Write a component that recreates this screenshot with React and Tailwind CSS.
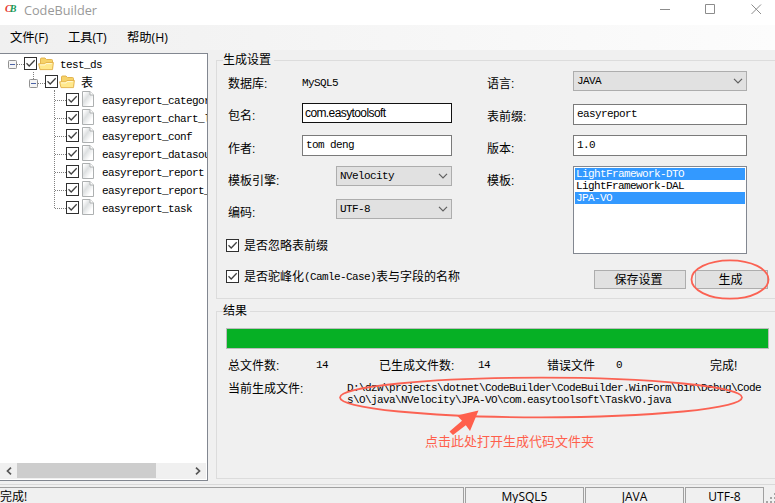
import React from 'react';

const tables = [
  'easyreport_category',
  'easyreport_chart_list',
  'easyreport_conf',
  'easyreport_datasource',
  'easyreport_report',
  'easyreport_report_his',
  'easyreport_task',
];

function Mono({ children, className = '' }) {
  return (
    <span className={`font-['Liberation_Mono','Noto_Sans_CJK_SC',monospace] text-[11px] tracking-[-0.6px] whitespace-pre ${className}`}>
      {children}
    </span>
  );
}

function Label({ children, className = '' }) {
  return (
    <div className={`flex h-4 items-center pt-[2px] whitespace-nowrap ${className}`}>
      <span>{children}</span>
    </div>
  );
}

function Value({ children, className = '' }) {
  return (
    <div className={`flex h-4 items-center ${className}`}>
      <Mono>{children}</Mono>
    </div>
  );
}

function CheckBox() {
  return (
    <svg className="block h-[13px] w-[13px] shrink-0" viewBox="0 0 13 13">
      <rect x="0.5" y="0.5" width="12" height="12" fill="#fff" stroke="#303030" />
      <path d="M2.5 6.3 L5.2 9 L10.7 3.3" fill="none" stroke="#404040" strokeWidth="1.3" />
    </svg>
  );
}

function Expander() {
  return (
    <svg className="block h-[9px] w-[9px] shrink-0" viewBox="0 0 9 9">
      <rect x="0.5" y="0.5" width="8" height="8" rx="0.8" fill="#f4f4f4" stroke="#919191" />
      <path d="M2 4.5H7" stroke="#4b63a7" />
    </svg>
  );
}

function Folder() {
  return (
    <svg className="block h-[16px] w-[16px] shrink-0" viewBox="0 0 16 16">
      <path d="M2.5 13 V3 Q2.5 2 3.5 2 H7 L8.5 3.5 H13.5 Q14.5 3.5 14.5 4.5 V12 Z" fill="#f6d269" stroke="#dfae45" strokeWidth="0.9" />
      <path d="M0.6 7.8 H6.5 L7.8 6.5 H15.4 L14.5 13.6 H2 Z" fill="#ffe88c" stroke="#e2b048" strokeWidth="0.9" />
      <path d="M2 8.9 H7 L8.3 7.6 H13.8" fill="none" stroke="#fff9d8" />
    </svg>
  );
}

function FileIcon() {
  return (
    <svg className="block h-[16px] w-[12px] shrink-0" viewBox="0 0 12 16">
      <defs>
        <linearGradient id="paper" x1="0" y1="0" x2="1" y2="1">
          <stop offset="0.1" stopColor="#fff" />
          <stop offset="0.4" stopColor="#dde0e1" />
          <stop offset="0.75" stopColor="#fff" />
        </linearGradient>
      </defs>
      <path d="M0.5 0.5 H8 L11.5 4 V15.5 H0.5 Z" fill="url(#paper)" stroke="#adb0b1" />
      <path d="M8 0.5 V4 H11.5" fill="#fff" stroke="#adb0b1" />
    </svg>
  );
}

function Combo({ children, className = '' }) {
  return (
    <div className={`flex h-5 items-center justify-between border border-[#adadad] bg-[#e1e1e1] pr-[3px] pl-[3px] ${className}`}>
      <Mono>{children}</Mono>
      <svg className="h-[6px] w-[10px]" viewBox="0 0 10 6">
        <path d="M1 0.8 L5 4.8 L9 0.8" fill="none" stroke="#5f5f5f" strokeWidth="1.2" />
      </svg>
    </div>
  );
}

function Field({ children, className = '' }) {
  return (
    <div className={`flex h-[21px] items-center border border-[#7a7a7a] bg-white pb-[2px] pl-[3px] ${className}`}>
      <Mono>{children}</Mono>
    </div>
  );
}

function Tree() {
  return (
    <div className="mt-[3px] flex h-[428px] w-[208px] shrink-0 flex-col overflow-hidden border-t border-r border-b border-[#828790] bg-white">
      <div className="flex h-[18px] shrink-0 items-center pt-[3px] pl-2">
        <Expander />
        <span className="w-[7px] border-t border-dotted border-[#808080]" />
        <div className="-mt-[3px]"><CheckBox /></div>
        <div className="-mt-px ml-px"><Folder /></div>
        <Mono className="ml-[6px]">test_ds</Mono>
      </div>
      <div className="flex h-[18px] shrink-0 items-center pl-[29px]">
        <div className="flex h-[18px] flex-col items-center">
          <span className="h-[7px] w-px border-l border-dotted border-[#808080]" />
          <Expander />
        </div>
        <span className="mt-[4px] w-[7px] border-t border-dotted border-[#808080]" />
        <CheckBox />
        <div className="mt-[2px] ml-px"><Folder /></div>
        <span className="mt-[3px] ml-[6px]">表</span>
      </div>
      <div className="flex shrink-0">
        <div className="ml-[54px] h-[118px] w-px border-l border-dotted border-[#808080]" />
        <div className="flex flex-col">
          {tables.map((name) => (
            <div key={name} className="flex h-[18px] items-center">
              <span className="mt-[3px] w-[11px] border-t border-dotted border-[#808080]" />
              <CheckBox />
              <div className="ml-[3px]"><FileIcon /></div>
              <Mono className="mt-[3px] ml-[8px]">{name}</Mono>
            </div>
          ))}
        </div>
      </div>
      <div className="mt-auto mr-px mb-px flex h-4 shrink-0 items-center bg-[#f0f0f0]">
        <div className="flex w-[17px] justify-center">
          <svg className="h-2 w-[6px]" viewBox="0 0 6 8"><path d="M5 0.7 L1.5 4 L5 7.3" fill="none" stroke="#555" strokeWidth="1.7" /></svg>
        </div>
        <div className="h-[15px] w-[139px] self-start bg-[#cdcdcd]" />
        <div className="ml-auto flex w-4 justify-center">
          <svg className="h-2 w-[6px]" viewBox="0 0 6 8"><path d="M1 0.7 L4.5 4 L1 7.3" fill="none" stroke="#555" strokeWidth="1.7" /></svg>
        </div>
      </div>
    </div>
  );
}

function Settings() {
  return (
    <section className="mt-[10px] flex h-[239px] flex-col border-t border-b border-l border-[#dcdcdc]">
      <div className="-mt-[8px] ml-[6px] flex h-[14px] w-[51px] shrink-0 items-center bg-[#f0f0f0] whitespace-nowrap">生成设置</div>
      <div className="flex pt-1">
        <div className="ml-[11px] flex w-[74px] flex-col pt-1">
          <Label>数据库:</Label>
          <Label className="mt-4">包名:</Label>
          <Label className="mt-[17px]">作者:</Label>
          <Label className="mt-4">模板引擎:</Label>
          <Label className="mt-4">编码:</Label>
        </div>
        <div className="flex w-[150px] flex-col pt-1">
          <Value>MySQL5</Value>
          <div className="mt-3 flex h-5 items-center border border-[#111] bg-white pl-[2px] font-['Liberation_Sans',sans-serif] text-[12px] tracking-[-0.6px]">com.easytoolsoft</div>
          <Field className="mt-3">tom deng</Field>
          <Combo className="mt-[10px] ml-[34px]">NVelocity</Combo>
          <Combo className="mt-[13px] ml-[34px]">UTF-8</Combo>
        </div>
        <div className="ml-[35px] flex w-[86px] flex-col pt-1">
          <Label>语言:</Label>
          <Label className="mt-[17px]">表前缀:</Label>
          <Label className="mt-4">版本:</Label>
          <Label className="mt-4">模板:</Label>
        </div>
        <div className="flex w-[174px] flex-col">
          <Combo>JAVA</Combo>
          <Field className="mt-[13px]">easyreport</Field>
          <Field className="mt-[10px]">1.0</Field>
          <div className="mt-[10px] flex h-[88px] flex-col border border-[#828790] bg-white p-px">
            <Mono className="h-3 bg-[#3399ff] pl-px leading-3 text-white">LightFramework-DTO</Mono>
            <Mono className="h-3 pl-px leading-3">LightFramework-DAL</Mono>
            <Mono className="h-3 bg-[#3399ff] pl-px leading-3 text-white">JPA-VO</Mono>
          </div>
        </div>
      </div>
      <div className="-mt-[17px] ml-[9px] flex h-4 shrink-0 items-center gap-[5px]">
        <CheckBox />
        <span className="pt-[2px]">是否忽略表前缀</span>
      </div>
      <div className="mt-[15px] flex h-[19px] shrink-0">
        <div className="ml-[9px] flex h-4 w-[368px] items-center gap-[5px] whitespace-nowrap">
          <CheckBox />
          <span className="flex items-center pt-[2px]">是否驼峰化<Mono>(Camle-Case)</Mono>表与字段的名称</span>
        </div>
        <button className="mt-[2px] flex h-[19px] w-[92px] shrink-0 items-center justify-center border border-[#adadad] bg-[#e1e1e1] pr-[3px]">保存设置</button>
        <button className="mt-[2px] ml-[9px] flex h-[19px] w-[73px] shrink-0 items-center justify-center border border-[#adadad] bg-[#e1e1e1] pr-[2px]">生成</button>
      </div>
    </section>
  );
}

function Results() {
  return (
    <section className="mt-3 flex h-[168px] flex-col border-t border-b border-l border-[#dcdcdc]">
      <div className="-mt-[8px] ml-[6px] flex h-[14px] w-[27px] shrink-0 items-center bg-[#f0f0f0] whitespace-nowrap">结果</div>
      <div className="mt-[10px] ml-[9px] h-[21px] w-[543px] shrink-0 border border-[#bcbcbc] bg-[#06b025]" />
      <div className="mt-2 ml-[11px] flex h-4 shrink-0">
        <Label className="w-[88px]">总文件数:</Label>
        <Value className="w-[63px]">14</Value>
        <Label className="w-[99px]">已生成文件数:</Label>
        <Value className="w-[69px]">14</Value>
        <Label className="w-[69px]">错误文件</Label>
        <Value className="w-[94px]">0</Value>
        <Label>完成!</Label>
      </div>
      <div className="mt-[7px] ml-[11px] flex">
        <Label className="w-[119px]">当前生成文件:</Label>
        <div className="mt-[2px] flex flex-col">
          <Mono className="leading-3">{'D:\\dzw\\projects\\dotnet\\CodeBuilder\\CodeBuilder.WinForm\\bin\\Debug\\Code'}</Mono>
          <Mono className="leading-3">{'s\\O\\java\\NVelocity\\JPA-VO\\com.easytoolsoft\\TaskVO.java'}</Mono>
        </div>
      </div>
      <div className="mt-[28px] ml-[208px] text-[13px] leading-4 text-[#ff5f4c]">点击此处打开生成代码文件夹</div>
    </section>
  );
}

export default function App() {
  return (
    <div className="relative flex h-[503px] w-[775px] flex-col overflow-hidden bg-[#f0f0f0] font-['Liberation_Sans','Noto_Sans_CJK_SC',sans-serif] text-[12px] leading-[14px] text-black">
      <header className="flex h-[25px] shrink-0 items-center bg-white">
        <span className="-mt-[7px] ml-[5px] flex w-[19px] font-['Liberation_Serif',serif] text-[10px] font-bold italic">
          <span className="text-[#e5352d]">C</span>
          <span className="-ml-[2px] text-[#159a55]">B</span>
        </span>
        <span className="-mt-[5px] font-['Open_Sans',sans-serif] text-[12.7px] text-[#999]">CodeBuilder</span>
        <svg className="-mt-[7px] mr-[12px] ml-auto h-[11px] w-[103px]" viewBox="0 0 103 11">
          <path d="M0 5.5H10 M45.5 0.5H54.5V9.5H45.5Z M91.5 0.5L101 10 M101 0.5L91.5 10" fill="none" stroke="#8c8c8c" />
        </svg>
      </header>
      <nav className="flex h-[25px] shrink-0 items-center bg-linear-to-r from-[#f0f0f0] to-[#fcfcfc] pl-[10px] font-['Open_Sans','Noto_Sans_CJK_SC',sans-serif] text-[12.3px]">
        <span className="w-[58px]">文件(F)</span>
        <span className="w-[59px]">工具(T)</span>
        <span>帮助(H)</span>
      </nav>
      <main className="flex h-[434px] shrink-0">
        <Tree />
        <div className="ml-2 flex min-w-0 flex-1 flex-col">
          <Settings />
          <Results />
        </div>
      </main>
      <footer className="flex h-[19px] shrink-0 gap-px border-t border-[#d9d9d9] pt-[2px] font-['Open_Sans','Noto_Sans_CJK_SC',sans-serif] text-[12px] leading-[17px]">
        <div className="h-5 w-[464px] border-t border-r border-[#a0a0a0]">完成!</div>
        <div className="h-5 w-[119px] border-x border-t border-[#a0a0a0] text-center">MySQL5</div>
        <div className="h-5 w-[99px] border-x border-t border-[#a0a0a0] text-center">JAVA</div>
        <div className="h-5 w-[79px] border-x border-t border-[#a0a0a0] text-center">UTF-8</div>
        <svg className="mt-[5px] ml-px h-[11px] w-[9px]" viewBox="0 0 9 11">
          <path d="M0 9h2v2H0z M4 9h2v2H4z M8 9h1v2H8z M4 5h2v2H4z M8 5h1v2H8z M8 1h1v2H8z" fill="#a5a5a5" />
        </svg>
      </footer>
      <svg className="pointer-events-none absolute inset-0 h-[503px] w-[775px]" viewBox="0 0 775 503">
        <g fill="none" stroke="#fb6253" strokeWidth="1.8">
          <ellipse cx="730" cy="279.5" rx="38.5" ry="19.2" />
          <ellipse cx="541" cy="397.5" rx="201" ry="19.8" />
        </g>
        <path d="M478.5 410.5 L470 431 L465.8 425.3 L453 435 L449.5 431.5 L462 420.8 L457 415.5 Z" fill="#ff5f4c" />
      </svg>
    </div>
  );
}
